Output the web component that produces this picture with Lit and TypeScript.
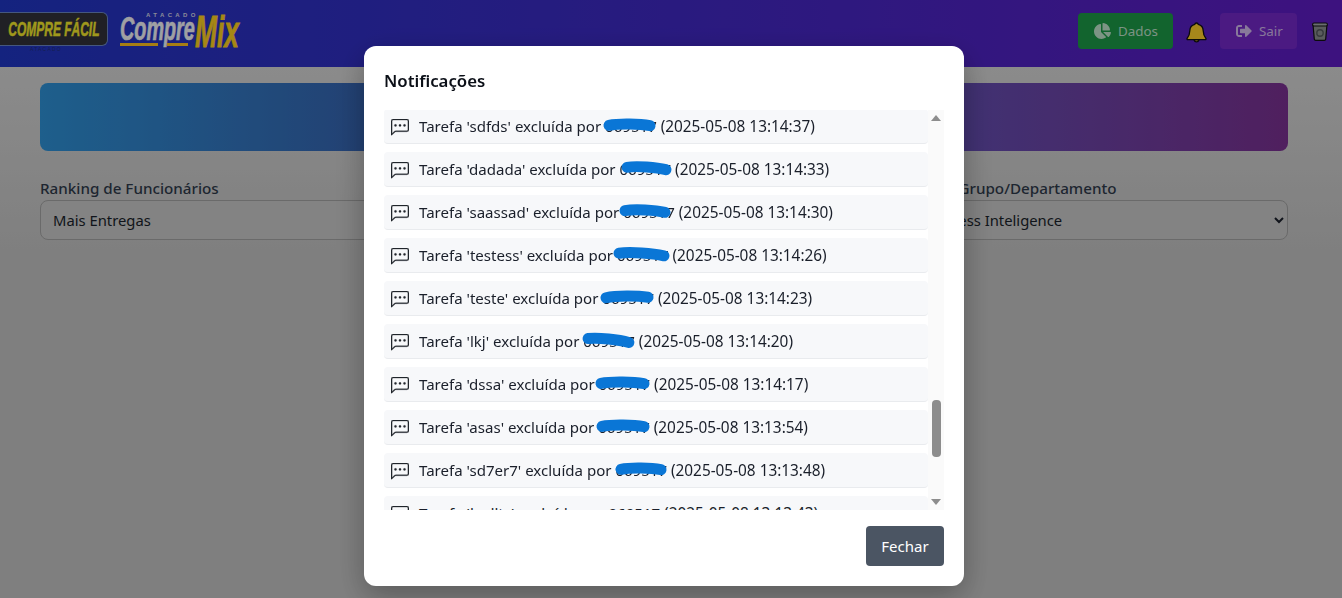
import { LitElement, html, css, svg } from "lit";
import { customElement } from "lit/decorators.js";

const rows = [
  { name: "sdfds", date: "2025-05-08 13:14:37", mark: 603, w: 53, tilt: -1 },
  { name: "dadada", date: "2025-05-08 13:14:33", mark: 621, w: 51, tilt: 2 },
  { name: "saassad", date: "2025-05-08 13:14:30", mark: 619, w: 52, tilt: 1 },
  { name: "testess", date: "2025-05-08 13:14:26", mark: 613, w: 57, tilt: 2 },
  { name: "teste", date: "2025-05-08 13:14:23", mark: 600, w: 54, tilt: -2 },
  { name: "lkj", date: "2025-05-08 13:14:20", mark: 582, w: 53, tilt: 4 },
  { name: "dssa", date: "2025-05-08 13:14:17", mark: 595, w: 55, tilt: -1 },
  { name: "asas", date: "2025-05-08 13:13:54", mark: 596, w: 54, tilt: -1 },
  { name: "sd7er7", date: "2025-05-08 13:13:48", mark: 615, w: 52, tilt: -1 },
  { name: "ksdlts", date: "2025-05-08 13:13:43", mark: 0, w: 0, tilt: 0 },
];

const chatIcon = svg`<path d="M14 1a1 1 0 0 1 1 1v8a1 1 0 0 1-1 1H4.414A2 2 0 0 0 3 11.586l-2 2V2a1 1 0 0 1 1-1zM2 0a2 2 0 0 0-2 2v12.793a.5.5 0 0 0 .854.353l2.853-2.853A1 1 0 0 1 4.414 12H14a2 2 0 0 0 2-2V2a2 2 0 0 0-2-2z"/><path d="M5 6a1 1 0 1 1-2 0 1 1 0 0 1 2 0m4 0a1 1 0 1 1-2 0 1 1 0 0 1 2 0m4 0a1 1 0 1 1-2 0 1 1 0 0 1 2 0"/>`;

@customElement("app-root")
export class AppRoot extends LitElement {
  static styles = css`
    :host {
      display: block;
      height: 100vh;
      overflow: hidden;
      font-family: "Noto Sans", "Open Sans", sans-serif;
      font-size: 15.2px;
      color: #1f2937;
      background: linear-gradient(180deg, #d6d6d6 67px, #c4c4c4 250px);
    }
    * { box-sizing: border-box; }
    .topbar {
      height: 67px;
      display: flex;
      align-items: flex-start;
      justify-content: space-between;
      padding: 12px 14px 0 0;
      background: linear-gradient(90deg, #2036c4, #5f1cc4);
    }
    .brands { display: flex; align-items: flex-start; gap: 12px; }
    .facil {
      position: relative;
      width: 108px;
      height: 34px;
      border: 1px solid #6a86c4;
      border-left: 0;
      border-radius: 0 6px 6px 0;
      background: #32323a;
      display: flex;
      align-items: center;
      justify-content: center;
    }
    .facil span {
      font-family: "Liberation Sans", sans-serif;
      font-weight: 700;
      font-style: italic;
      font-size: 21px;
      line-height: 24px;
      color: #f6ea2c;
      -webkit-text-stroke: 0.5px #f6ea2c;
      white-space: nowrap;
      flex: none;
      transform: scaleX(0.57);
    }
    .facil small {
      position: absolute;
      left: 30px;
      top: 33px;
      font-family: "Liberation Sans", sans-serif;
      font-size: 5px;
      line-height: 6px;
      letter-spacing: 1.2px;
      color: #20307a;
      white-space: nowrap;
    }
    .mix {
      position: relative;
      width: 122px;
      height: 46px;
      margin-top: -2px;
      display: flex;
      align-items: flex-start;
      font-family: "Liberation Sans", sans-serif;
      font-weight: 700;
      font-style: italic;
    }
    .mix small {
      position: absolute;
      left: 26px;
      top: 1px;
      font-size: 6px;
      font-style: normal;
      letter-spacing: 3.4px;
      line-height: 8px;
      color: #d6d8e8;
      white-space: nowrap;
    }
    .mix-compre {
      flex: none;
      width: 75px;
      margin-top: 2px;
      font-size: 33px;
      line-height: 33px;
      color: #f5f6fa;
      -webkit-text-stroke: 0.6px #f5f6fa;
      transform: scaleX(0.6);
      transform-origin: left center;
      white-space: nowrap;
    }
    .mix-name {
      flex: none;
      font-size: 44px;
      line-height: 44px;
      color: #ffd020;
      -webkit-text-stroke: 0.8px #ffd020;
      transform: scaleX(0.6);
      transform-origin: left center;
      white-space: nowrap;
    }
    .mix-rule { position: absolute; top: 33px; height: 3px; background: #ffc020; }
    .rule-a { left: 0; width: 38px; }
    .rule-b { left: 47px; width: 21px; }
    .actions { display: flex; align-items: center; margin-top: 1px; }
    .btn {
      height: 36px;
      border: 0;
      border-radius: 4px;
      display: flex;
      align-items: center;
      gap: 7px;
      font: inherit;
      font-size: 13.4px;
      padding: 0 16px;
      flex: none;
    }
    .btn svg { fill: currentColor; flex: none; }
    .green { width: 95px; background: #1c9a47; color: rgba(255, 255, 255, 0.72); }
    .purple { width: 77px; background: #7329c8; color: rgba(255, 255, 255, 0.68); }
    .bell { margin: 3px 13px 0; display: block; }
    .trash { margin-left: 15px; display: block; }
    .content { padding: 16px 54px 0 40px; }
    .banner {
      height: 68px;
      border-radius: 8px;
      background: linear-gradient(90deg, #2e92d7 0%, #3664b1 26%, #644db1 74%, #7b3192 100%);
    }
    .filters {
      display: grid;
      grid-template-columns: repeat(3, 1fr);
      gap: 24px;
      margin-top: 26px;
    }
    .field label {
      display: block;
      font-weight: 500;
      line-height: 23px;
      color: #2f3a4a;
    }
    .field select {
      width: 100%;
      height: 40px;
      font: inherit;
      font-size: 14.8px;
      color: #1a1f2a;
      padding: 0 8px;
      border: 1px solid #a3a3a3;
      border-radius: 8px;
      background-color: #c9c9c9;
    }
    .backdrop {
      position: fixed;
      inset: 0;
      padding: 46px 14px 0 0;
      background: rgba(0, 0, 0, 0.35);
      display: flex;
      justify-content: center;
      align-items: flex-start;
    }
    .modal {
      width: 600px;
      height: 540px;
      background: #fff;
      border-radius: 12px;
      padding: 20px;
      display: flex;
      flex-direction: column;
      box-shadow: 0 10px 30px rgba(0, 0, 0, 0.3);
    }
    h2 {
      margin: 0;
      flex: none;
      font-size: 16.8px;
      line-height: 30px;
      height: 44px;
      font-weight: 600;
      color: #0b0f17;
    }
    .scroller {
      display: flex;
      flex: none;
      height: 400px;
      background: #fafafa;
    }
    .list {
      flex: 1;
      min-width: 0;
      overflow: hidden;
      background: #fff;
    }
    .list-inner { margin-top: -1px; display: flex; flex-direction: column; gap: 8px; }
    .row {
      position: relative;
      height: 35px;
      flex: none;
      display: flex;
      align-items: center;
      gap: 10px;
      padding: 0 7px;
      background: #f7f8fa;
      border-bottom: 1px solid #e9ebee;
      border-radius: 4px;
      font-size: 15.05px;
      color: #1a1f2a;
      white-space: nowrap;
    }
    .row .date { font-size: 15.35px; }
    .row > .chat {
      flex: none;
      fill: #22262c;
      stroke: #22262c;
      stroke-width: 0.25;
      margin-top: 2px;
    }
    .mark { position: absolute; top: 8px; pointer-events: none; }
    .mark path { fill: none; stroke: #0a76d6; stroke-width: 11; stroke-linecap: round; }
    .bar {
      width: 16px;
      flex: none;
      display: flex;
      flex-direction: column;
      align-items: center;
      background: #fafafa;
    }
    .arrow { height: 16px; flex: none; display: flex; align-items: center; justify-content: center; }
    .arrow svg { fill: #8d8d8d; display: block; }
    .track { flex: 1; display: flex; flex-direction: column; padding-top: 274px; }
    .thumb { width: 9px; height: 57px; background: #8d8d8d; border-radius: 4px; }
    .foot { margin-top: auto; display: flex; justify-content: flex-end; }
    .close {
      width: 78px;
      height: 40px;
      border: 0;
      border-radius: 4px;
      background: #4b5563;
      color: #fff;
      font: inherit;
      font-size: 15px;
    }
  `;

  render() {
    return html`
      <header class="topbar">
        <div class="brands">
          <div class="facil"><span>COMPRE FÁCIL</span><small>ATACADO</small></div>
          <div class="mix">
            <small>ATACADO</small>
            <span class="mix-compre">Compre</span>
            <span class="mix-name">Mix</span>
            <i class="mix-rule rule-a"></i>
            <i class="mix-rule rule-b"></i>
          </div>
        </div>
        <div class="actions">
          <button class="btn green">
            <svg width="17" height="16" viewBox="0 0 544 512"><path d="M527.79 288H290.5l158.03 158.03c6.04 6.04 15.98 6.53 22.19.68 38.7-36.46 65.32-85.61 73.13-140.86 1.34-9.46-6.51-17.85-16.06-17.85zm-15.83-64.8C503.72 103.74 408.26 8.28 288.8.04 279.68-.59 272 7.1 272 16.24V240h223.77c9.14 0 16.82-7.68 16.19-16.8zM224 288V50.71c0-9.55-8.39-17.4-17.84-16.06C86.99 51.49-4.1 155.6.14 280.37 4.5 408.51 114.83 513.59 243.03 511.98c50.4-.63 96.97-16.87 135.26-44.03 7.9-5.6 8.42-17.23 1.57-24.08L224 288z"/></svg>
            Dados
          </button>
          <svg class="bell" width="21" height="21" viewBox="0 0 21 21">
            <path d="M10.5 1c1 0 1.6.6 1.7 1.4 3.2.7 4.9 3.2 5 6.4.1 3 .6 5.3 2.6 7.4.5.6.2 1.5-.7 1.5H1.9c-.9 0-1.2-.9-.7-1.5 2-2.1 2.5-4.4 2.6-7.4.1-3.2 1.8-5.7 5-6.4.1-.8.7-1.4 1.7-1.4z" fill="#ffd02a" stroke="#111" stroke-width="1.3" stroke-linejoin="round"/>
            <path d="M8 18c.3 1.1 1.2 1.9 2.5 1.9s2.2-.8 2.5-1.9z" fill="#ffd02a" stroke="#111" stroke-width="1.1"/>
          </svg>
          <button class="btn purple">
            <svg width="16" height="16" viewBox="0 0 512 512"><path d="M497 273L329 441c-15 15-41 4.5-41-17v-96H152c-13.3 0-24-10.7-24-24v-96c0-13.3 10.7-24 24-24h136V88c0-21.4 25.9-32 41-17l168 168c9.3 9.4 9.3 24.6 0 34zM192 436v-40c0-6.6-5.4-12-12-12H96c-17.7 0-32-14.3-32-32V160c0-17.7 14.3-32 32-32h84c6.6 0 12-5.4 12-12V76c0-6.6-5.4-12-12-12H96c-53 0-96 43-96 96v192c0 53 43 96 96 96h84c6.6 0 12-5.4 12-12z"/></svg>
            Sair
          </button>
          <svg class="trash" width="16" height="19" viewBox="0 0 16 19">
            <path d="M1 2.5h14l-1.3 14.6c-.1.8-.7 1.3-1.4 1.3H3.7c-.7 0-1.3-.5-1.4-1.3z" fill="#8a8e90" stroke="#111" stroke-width="1.2" stroke-linejoin="round"/>
            <rect x="0.6" y="1" width="14.8" height="3" rx="1.4" fill="#a4a8ac" stroke="#111" stroke-width="1.1"/>
            <circle cx="8" cy="11" r="3.2" fill="none" stroke="#55595e" stroke-width="1.4"/>
          </svg>
        </div>
      </header>
      <main class="content">
        <div class="banner"></div>
        <div class="filters">
          <div class="field">
            <label>Ranking de Funcionários</label>
            <select><option>Mais Entregas</option></select>
          </div>
          <div class="field">
            <label>Período</label>
            <select><option>Todos</option></select>
          </div>
          <div class="field">
            <label>Filtro por Grupo/Departamento</label>
            <select><option>BI Business Inteligence</option></select>
          </div>
        </div>
      </main>
      <div class="backdrop">
        <section class="modal">
          <h2>Notificações</h2>
          <div class="scroller">
            <div class="list">
              <div class="list-inner">
                ${rows.map(
                  (r) => html`
                    <div class="row">
                      <svg class="chat" width="18" height="17" viewBox="0 0 16 16" preserveAspectRatio="none">${chatIcon}</svg>
                      <span>Tarefa '${r.name}' excluída por 069517 <span class="date">(${r.date})</span></span>
                      ${r.w
                        ? html`<svg class="mark" style="left:${r.mark - 384}px;transform:rotate(${r.tilt}deg)" width="${r.w}" height="16" viewBox="0 0 ${r.w} 16"><path d="M6 8 C ${r.w * 0.3} 6, ${r.w * 0.7} 7, ${r.w - 6} 9"/></svg>`
                        : ""}
                    </div>
                  `
                )}
              </div>
            </div>
            <div class="bar">
              <div class="arrow"><svg width="10" height="6" viewBox="0 0 10 6"><path d="M5 0l5 6H0z"/></svg></div>
              <div class="track"><div class="thumb"></div></div>
              <div class="arrow"><svg width="10" height="6" viewBox="0 0 10 6"><path d="M0 0h10L5 6z"/></svg></div>
            </div>
          </div>
          <div class="foot"><button class="close">Fechar</button></div>
        </section>
      </div>
    `;
  }
}
